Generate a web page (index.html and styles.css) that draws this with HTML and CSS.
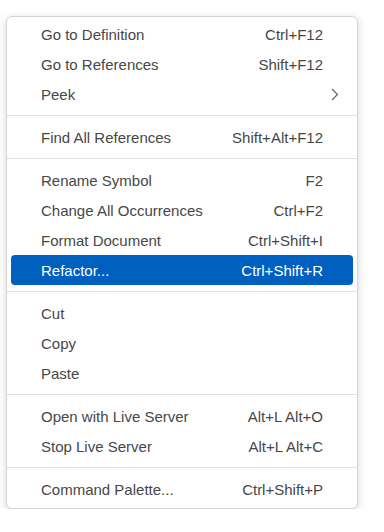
FILE: index.html
```html
<!DOCTYPE html>
<html lang="en">
<head>
    <meta charset="UTF-8">
    <meta name="viewport" content="width=device-width, initial-scale=1.0">
    <title>Context Menu</title>
    <link rel="stylesheet" href="styles.css">
</head>
<body>
    <div class="menu">
        <div class="item"><span class="label">Go to Definition</span><span class="keys">Ctrl+F12</span></div>
        <div class="item"><span class="label">Go to References</span><span class="keys">Shift+F12</span></div>
        <div class="item submenu"><span class="label">Peek</span>
            <svg class="chevron" width="8" height="13" viewBox="0 0 8 13"><path d="M1 1 L6.5 6.5 L1 12" fill="none" stroke="#666666" stroke-width="1.2"/></svg>
        </div>
        <div class="separator"></div>
        <div class="item"><span class="label">Find All References</span><span class="keys">Shift+Alt+F12</span></div>
        <div class="separator"></div>
        <div class="item"><span class="label">Rename Symbol</span><span class="keys">F2</span></div>
        <div class="item"><span class="label">Change All Occurrences</span><span class="keys">Ctrl+F2</span></div>
        <div class="item"><span class="label">Format Document</span><span class="keys">Ctrl+Shift+I</span></div>
        <div class="item active"><span class="label">Refactor...</span><span class="keys">Ctrl+Shift+R</span></div>
        <div class="separator"></div>
        <div class="item"><span class="label">Cut</span></div>
        <div class="item"><span class="label">Copy</span></div>
        <div class="item"><span class="label">Paste</span></div>
        <div class="separator"></div>
        <div class="item"><span class="label">Open with Live Server</span><span class="keys">Alt+L Alt+O</span></div>
        <div class="item"><span class="label">Stop Live Server</span><span class="keys">Alt+L Alt+C</span></div>
        <div class="separator"></div>
        <div class="item"><span class="label">Command Palette...</span><span class="keys">Ctrl+Shift+P</span></div>
    </div>
</body>
</html>
```
FILE: styles.css
```css
body {
    font-family: "Liberation Sans", Arial, sans-serif;
    background-color: #ffffff;
    margin: 0;
    padding: 16px 0 0 6px;
}
.menu {
    width: 350px;
    background-color: #ffffff;
    border: 1px solid #d4d4d4;
    border-radius: 6px;
    box-shadow: 0 2px 8px rgba(0,0,0,0.16);
    padding: 2px 0 4px;
}
.item {
    display: flex;
    align-items: center;
    justify-content: space-between;
    height: 30px;
    margin: 0 4px;
    padding: 0 30px;
    font-size: 15px;
    color: #474747;
    border-radius: 4px;
}
.item.active {
    background-color: #0060c0;
    color: #ffffff;
}
.submenu {
    padding-right: 14px;
}
.chevron {
    display: block;
}
.separator {
    height: 1px;
    background-color: #e0e0e0;
    margin: 6px 0;
}
```
